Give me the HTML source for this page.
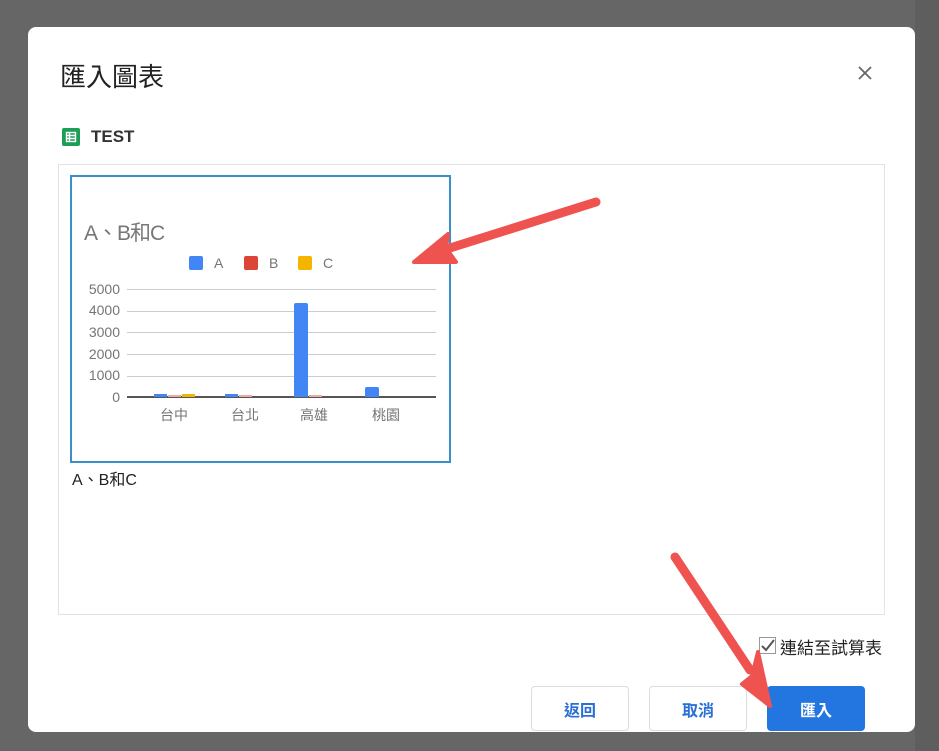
<!DOCTYPE html>
<html><head><meta charset="utf-8"><style>
*{margin:0;padding:0;box-sizing:border-box}
body{width:939px;height:751px;background:#666;position:relative;overflow:hidden;font-family:"Liberation Sans","Noto Sans CJK TC",sans-serif}
.a{position:absolute}
.dlg{left:28px;top:27px;width:887px;height:705px;background:#fff;border-radius:8px}
.t{font-size:14px;color:#757575}
.gl{position:absolute;left:127px;width:309px;height:1px;background:#ccc}
.btn{position:absolute;top:686px;height:45px;border-radius:4px;font-size:16px;font-weight:bold;display:flex;align-items:center;justify-content:center}
</style></head><body>
<div class="a" style="left:915px;top:0;width:24px;height:751px;background:#5e5e5e"></div>
<div class="a dlg"></div>
<div class="a" style="left:60px;top:57px;font-size:26px;color:#222">匯入圖表</div>
<svg class="a" style="left:857px;top:65px" width="16" height="16" viewBox="0 0 16 16"><path d="M2 2L14 14M14 2L2 14" stroke="#666" stroke-width="1.8"/></svg>
<div class="a" style="left:62px;top:128px;width:18px;height:18px;background:#1e9d57;border-radius:2px"></div>
<svg class="a" style="left:62px;top:128px" width="18" height="18"><rect x="4.5" y="4.5" width="9" height="9" fill="none" stroke="#fff" stroke-width="1.4"/><path d="M4.5 7.5H13.5M4.5 10.5H13.5M7.5 4.5V13.5" stroke="#fff" stroke-width="1.4"/></svg>
<div class="a" style="left:91px;top:127px;font-size:17px;font-weight:bold;color:#333">TEST</div>
<div class="a" style="left:58px;top:164px;width:827px;height:451px;border:1px solid #e3e3e3"></div>
<div class="a" style="left:70px;top:175px;width:381px;height:288px;border:2px solid #3a8fc9"></div>
<div class="a" style="left:84px;top:217px;font-size:21px;color:#777;letter-spacing:-1px">A、B和C</div>
<div class="a" style="left:189px;top:256px;width:14px;height:14px;background:#4285f4;border-radius:2px"></div>
<div class="a t" style="left:214px;top:255px">A</div>
<div class="a" style="left:244px;top:256px;width:14px;height:14px;background:#db4437;border-radius:2px"></div>
<div class="a t" style="left:269px;top:255px">B</div>
<div class="a" style="left:298px;top:256px;width:14px;height:14px;background:#f4b400;border-radius:2px"></div>
<div class="a t" style="left:323px;top:255px">C</div>
<div class="gl" style="top:289px"></div><div class="gl" style="top:311px"></div><div class="gl" style="top:332px"></div><div class="gl" style="top:354px"></div><div class="gl" style="top:376px"></div>
<div class="gl" style="top:396px;height:2px;background:#555"></div>
<div class="a t" style="left:84px;top:281px;width:36px;text-align:right">5000</div>
<div class="a t" style="left:84px;top:302px;width:36px;text-align:right">4000</div>
<div class="a t" style="left:84px;top:324px;width:36px;text-align:right">3000</div>
<div class="a t" style="left:84px;top:346px;width:36px;text-align:right">2000</div>
<div class="a t" style="left:84px;top:367px;width:36px;text-align:right">1000</div>
<div class="a t" style="left:84px;top:389px;width:36px;text-align:right">0</div>
<div class="a" style="left:154px;top:394px;width:13px;height:3px;background:#4285f4"></div>
<div class="a" style="left:168px;top:395px;width:13px;height:2px;background:#f0a8a0"></div>
<div class="a" style="left:182px;top:394px;width:13px;height:3px;background:#f4b400"></div>
<div class="a" style="left:225px;top:394px;width:13px;height:3px;background:#4285f4"></div>
<div class="a" style="left:239px;top:395px;width:13px;height:2px;background:#f0a8a0"></div>
<div class="a" style="left:294px;top:303px;width:14px;height:94px;background:#4285f4;border-radius:2px 2px 0 0"></div>
<div class="a" style="left:309px;top:395px;width:13px;height:2px;background:#f0a8a0"></div>
<div class="a" style="left:365px;top:387px;width:14px;height:10px;background:#4285f4;border-radius:2px 2px 0 0"></div>
<div class="a t" style="left:160px;top:405px">台中</div>
<div class="a t" style="left:231px;top:405px">台北</div>
<div class="a t" style="left:300px;top:405px">高雄</div>
<div class="a t" style="left:372px;top:405px">桃園</div>
<div class="a" style="left:72px;top:466px;font-size:16px;color:#222">A、B和C</div>
<svg class="a" style="left:759px;top:637px" width="17" height="17"><rect x="0.5" y="0.5" width="16" height="16" fill="#fff" stroke="#999"/><path d="M3 9L7 13L15 3" fill="none" stroke="#555" stroke-width="2"/></svg>
<div class="a" style="left:780px;top:634px;font-size:17px;color:#222">連結至試算表</div>
<div class="btn" style="left:531px;width:98px;border:1px solid #ddd;color:#2a6fd6">返回</div>
<div class="btn" style="left:649px;width:98px;border:1px solid #ddd;color:#2a6fd6">取消</div>
<div class="btn" style="left:767px;width:98px;background:#2376e0;color:#fff">匯入</div>
<svg class="a" style="left:0;top:0" width="939" height="751">
<g fill="#ef5350" stroke="#ef5350" stroke-linecap="round" stroke-linejoin="round">
<path d="M596 202L450 248" stroke-width="9"/>
<path d="M414 262L448 234L446 248L456 262Z" stroke-width="4"/>
<path d="M675 557L750 670" stroke-width="9"/>
<path d="M770 706L742 684L752 676L758 652Z" stroke-width="4"/>
</g></svg>
</body></html>
